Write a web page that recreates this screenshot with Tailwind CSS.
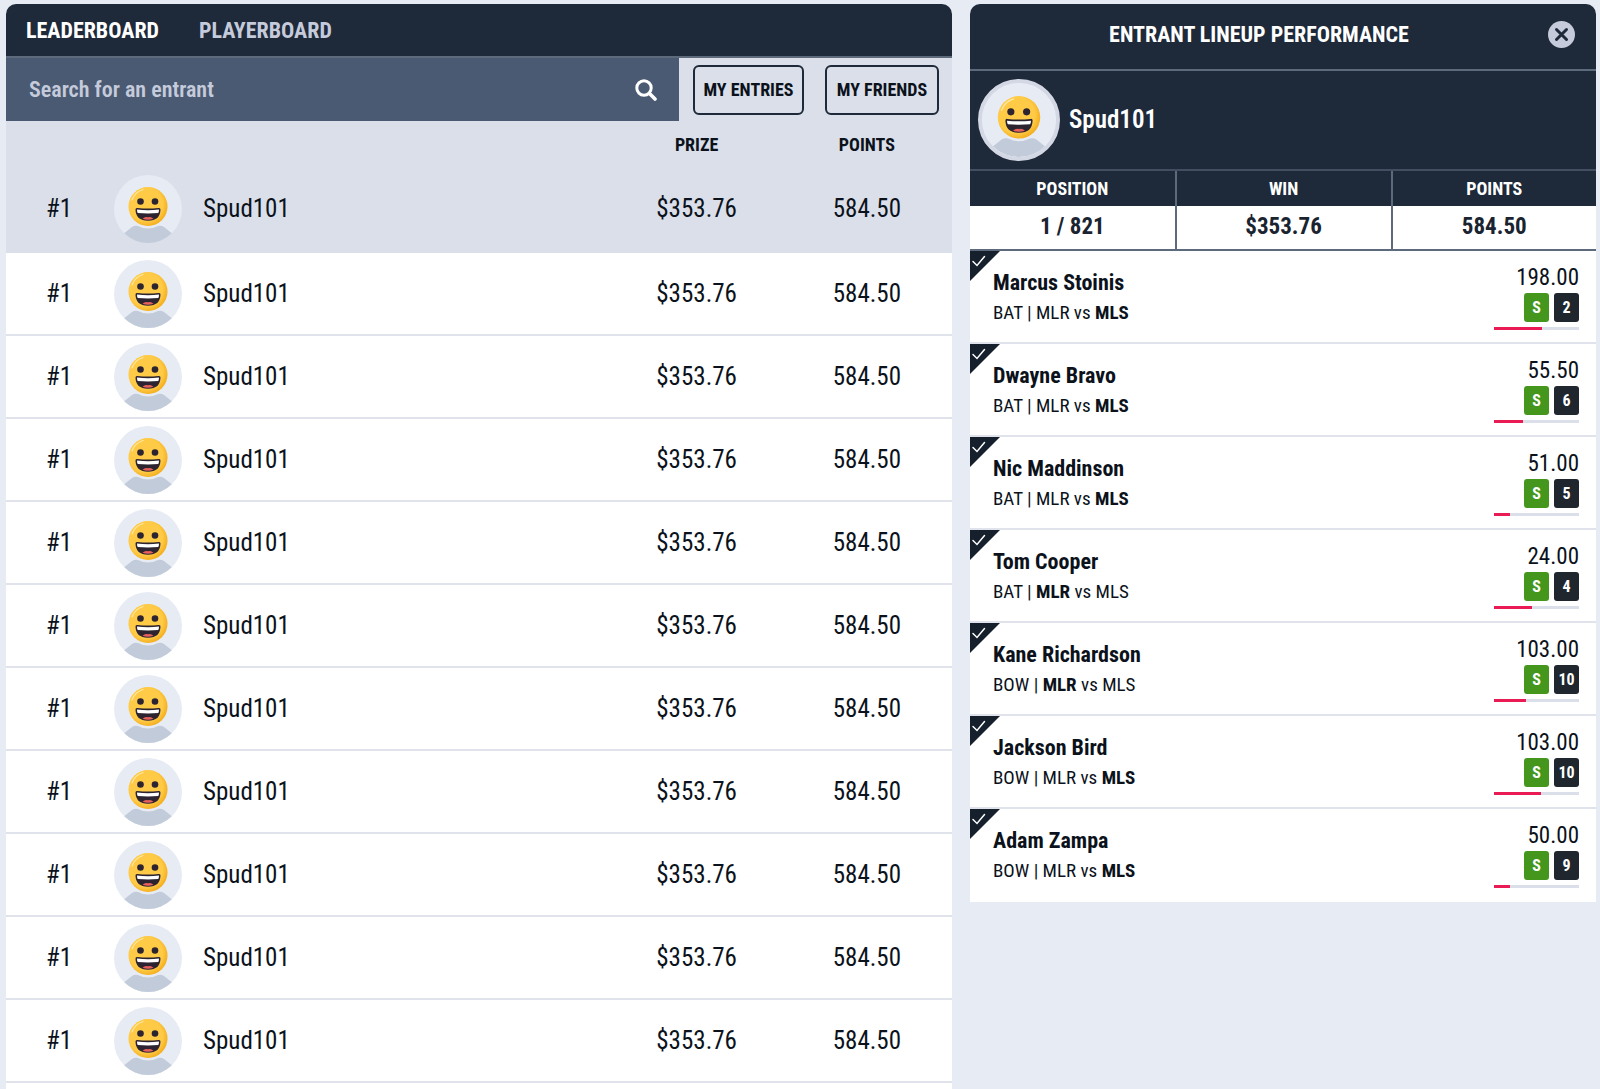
<!DOCTYPE html>
<html lang="en">
<head>
<meta charset="utf-8">
<meta name="viewport" content="width=device-width, initial-scale=1">
<title>Leaderboard</title>
<script src="https://cdn.jsdelivr.net/npm/@tailwindcss/browser@4"></script>
</head>
<body class="bg-[#e7ebf4] font-['Avenir_Next_Condensed','Roboto_Condensed','Lato',sans-serif] text-[#0b121b]">
<svg class="absolute size-0" aria-hidden="true">
  <defs>
    <clipPath id="disc"><circle cx="34" cy="34" r="34"/></clipPath>
    <radialGradient id="face" cx="44%" cy="44%" r="58%">
      <stop offset="0.75" stop-color="#ffca45"/><stop offset="1" stop-color="#f3ad1c"/>
    </radialGradient>
    <symbol id="avatar" viewBox="0 0 68 68">
      <circle cx="34" cy="34" r="34" fill="#e7ebf4"/>
      <g clip-path="url(#disc)">
        <path d="M8 60 L18 52 Q21 50 24 51 Q34 56 44 51 Q47 50 50 52 L60 60 V68 H8Z" fill="#c1cbd9"/>
      </g>
      <circle cx="34" cy="31.500" r="19.500" fill="url(#face)"/>
      <path d="M18 25 Q21 17 29 14.500" fill="none" stroke="#ffe9a8" stroke-width="1.200" stroke-linecap="round"/>
      <circle cx="26.500" cy="26.500" r="3.300" fill="#2c2430"/>
      <circle cx="41" cy="26.500" r="3.300" fill="#2c2430"/>
      <path d="M21.500 34.500 Q21.500 32.600 23.500 33 Q34 34.200 44.500 33 Q46.500 32.600 46.500 34.500 Q46.300 45.700 34 45.700 Q21.700 45.700 21.500 34.500Z" fill="#2c2430"/>
      <path d="M23 34.600 Q34 35.900 45 34.600 Q45 37 44.200 38 Q34 38.800 23.800 38 Q23 37 23 34.600Z" fill="#fff"/>
      <path d="M28.500 43.800 Q31 41.300 34 42.300 Q37 41.300 39.500 43.800 Q34 45.600 28.500 43.800Z" fill="#e8605c"/>
    </symbol>
  </defs>
</svg>

<main class="grid h-screen grid-cols-[946fr_626fr] items-start gap-x-[18px] overflow-hidden pt-1 pr-1 pl-1.5">
  <section class="h-full overflow-hidden rounded-t-[10px] bg-white">
    <nav class="flex h-[54px] items-center gap-10 border-b-2 border-[#5d6a7c] bg-[#1e2939] px-5 text-[22px] font-bold">
      <a href="#leaderboard" class="text-white">LEADERBOARD</a>
      <a href="#playerboard" class="text-[#c5cbdb]">PLAYERBOARD</a>
    </nav>
    <form class="flex h-[63px] items-center bg-[#dbdfe9] pr-[13px]" onsubmit="return false">
      <div class="flex h-full flex-1 items-center bg-[#4a5a73] pr-[22px] pl-[23px]">
        <input type="search" aria-label="Search for an entrant" placeholder="Search for an entrant" class="h-full min-w-0 flex-1 text-[22px] font-semibold text-white outline-none placeholder:text-[#c5cbdb]">
        <button type="submit" aria-label="Search" class="text-white">
          <svg class="size-[22px]" viewBox="0 0 22 22" fill="none" stroke="currentColor" stroke-linecap="round"><circle cx="9" cy="9" r="7.200" stroke-width="3"/><path d="M14.500 14.500 L20 20" stroke-width="3.600"/></svg>
        </button>
      </div>
      <button type="button" class="ml-3.5 h-[50px] w-[111px] rounded-md border-2 border-[#1e2939] text-lg font-bold">MY ENTRIES</button>
      <button type="button" class="ml-[21px] h-[50px] w-[114px] rounded-md border-2 border-[#1e2939] text-lg font-bold">MY FRIENDS</button>
    </form>
    <table class="w-full table-fixed border-separate border-spacing-0 text-center">
      <colgroup><col class="w-[106px]"><col><col class="w-[18%]"><col class="w-[18%]"></colgroup>
      <thead class="bg-[#dbdfe9] text-lg font-bold">
        <tr class="h-12"><td colspan="2"></td><th scope="col">PRIZE</th><th scope="col">POINTS</th></tr>
      </thead>
      <tbody id="entrants" class="text-[25px]"></tbody>
    </table>
  </section>

  <section class="overflow-hidden rounded-t-[10px] bg-white">
    <header class="flex h-[67px] items-center border-b-2 border-[#5d6a7c] bg-[#1e2939] pr-[21px] pb-1 text-white">
      <h2 class="flex-1 text-center text-[22px] font-bold">ENTRANT LINEUP PERFORMANCE</h2>
      <button type="button" aria-label="Close">
        <svg class="size-[27px]" viewBox="0 0 27 27"><circle cx="13.500" cy="13.500" r="13.500" fill="#c5cbdb"/><path d="M8.500 8.500 L18.500 18.500 M18.500 8.500 L8.500 18.500" stroke="#1e2939" stroke-width="3" stroke-linecap="round"/></svg>
      </button>
    </header>
    <div class="flex h-[100px] items-center gap-[9px] border-b-2 border-[#434f60] bg-[#1e2939] pl-2">
      <svg class="size-[82px] rounded-full border-4 border-[#d3d8e4] bg-[#e7ebf4]" aria-hidden="true"><use href="#avatar"/></svg>
      <h3 class="text-[25px] font-semibold text-white">Spud101</h3>
    </div>
    <table class="w-full table-fixed border-separate border-spacing-0 text-center font-bold">
      <colgroup><col class="w-[33%]"><col class="w-[34.5%]"><col class="w-[32.5%]"></colgroup>
      <thead class="bg-[#1e2939] text-lg text-white">
        <tr class="h-[35px]"><th scope="col" class="border-r-2 border-[#5d6a7c]">POSITION</th><th scope="col" class="border-r-2 border-[#5d6a7c]">WIN</th><th scope="col">POINTS</th></tr>
      </thead>
      <tbody class="text-[23px] text-[#1a2431]">
        <tr class="h-[45px]"><td class="border-r-2 border-b-2 border-[#5d6a7c]">1 / 821</td><td class="border-r-2 border-b-2 border-[#5d6a7c]">$353.76</td><td class="border-b-2 border-[#5d6a7c]">584.50</td></tr>
      </tbody>
    </table>
    <ul id="lineup"></ul>
  </section>
</main>

<script>
  const entrants = Array.from({ length: 11 }, () => ({ rank: '#1', name: 'Spud101', prize: '$353.76', points: '584.50' }));
  document.getElementById('entrants').innerHTML = entrants.map((e, i) => {
    const cell = i ? 'border-b-2 border-[#e0e3eb]' : 'border-b-4 border-[#dbdfe9] bg-[#dbdfe9]';
    return `<tr class="${i ? 'h-[83px]' : 'h-[84px]'}">
      <td class="${cell}">${e.rank}</td>
      <td class="${cell} text-left"><div class="flex items-center gap-[21px] pl-0.5"><svg class="size-[68px]" aria-hidden="true"><use href="#avatar"/></svg>${e.name}</div></td>
      <td class="${cell}">${e.prize}</td>
      <td class="${cell}">${e.points}</td></tr>`;
  }).join('');

  const lineup = [
    ['Marcus Stoinis', 'BAT', 'MLS', '198.00', 2, 57],
    ['Dwayne Bravo', 'BAT', 'MLS', '55.50', 6, 34],
    ['Nic Maddinson', 'BAT', 'MLS', '51.00', 5, 19],
    ['Tom Cooper', 'BAT', 'MLR', '24.00', 4, 45],
    ['Kane Richardson', 'BOW', 'MLR', '103.00', 10, 38],
    ['Jackson Bird', 'BOW', 'MLS', '103.00', 10, 55],
    ['Adam Zampa', 'BOW', 'MLS', '50.00', 9, 19],
  ];
  const team = (name, own) => name === own ? `<b>${name}</b>` : name;
  document.getElementById('lineup').innerHTML = lineup.map(([name, role, own, points, count, share]) => `
    <li class="relative flex h-[93px] justify-between border-b-2 border-[#e0e3eb] pr-[17px] pl-[23px] last:border-b-0">
      <svg class="absolute top-0 left-0 size-[30px]" viewBox="0 0 30 30" aria-hidden="true"><path d="M0 0H30L0 30Z" fill="#15202c"/><path d="M3 10.500 L7 14.500 L14.500 5.500" fill="none" stroke="#fff" stroke-width="1.500" stroke-linecap="round"/></svg>
      <div class="pt-4">
        <h4 class="text-[22px]/8 font-bold">${name}</h4>
        <p class="text-[19px]/7">${role} | ${team('MLR', own)} vs ${team('MLS', own)}</p>
      </div>
      <div class="flex flex-col items-end pt-3">
        <span class="text-[23px]/[30px]">${points}</span>
        <div class="flex gap-[5px] text-base font-bold text-white">
          <span class="flex h-[29px] w-[25px] items-center justify-center rounded-[3px] bg-[#44961c]">S</span>
          <span class="flex h-[29px] w-[25px] items-center justify-center rounded-[3px] bg-[#1f262d]">${count}</span>
        </div>
        <div class="mt-[5px] h-[3px] w-[85px] bg-[#dbdfe9]"><div class="h-full bg-[#ea1a55]" style="width:${share}%"></div></div>
      </div>
    </li>`).join('');
</script>
</body>
</html>
